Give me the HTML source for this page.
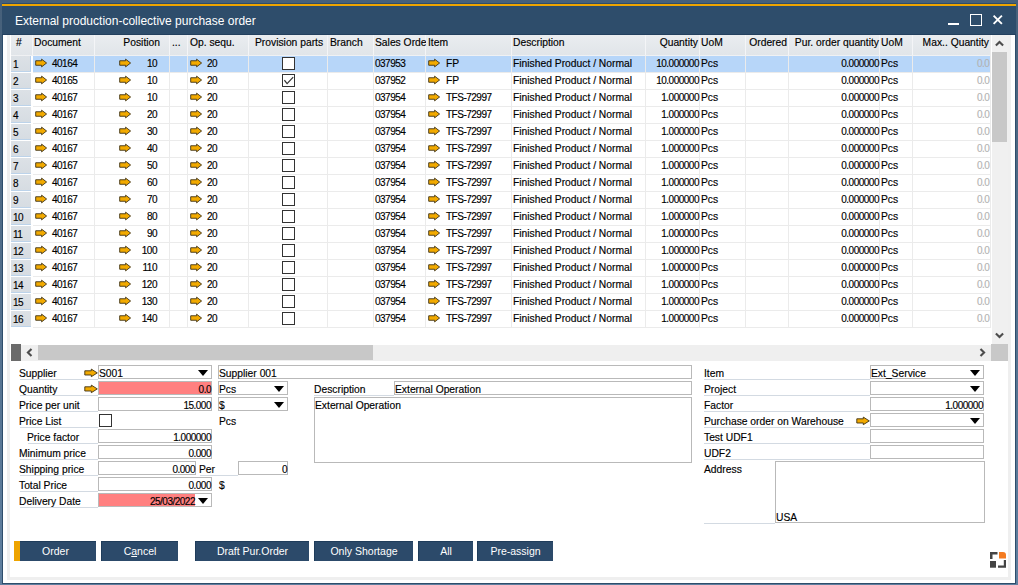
<!DOCTYPE html><html><head><meta charset="utf-8"><style>
*{margin:0;padding:0;box-sizing:border-box}
html,body{width:1018px;height:585px;overflow:hidden}
body{position:relative;background:linear-gradient(#46607a,#5f7f9f);font-family:"Liberation Sans",sans-serif;font-size:10px;color:#000}
.b{position:absolute}
.t{position:absolute;white-space:nowrap;line-height:12px;font-size:10.3px;-webkit-text-stroke:0.15px currentColor}
.r{text-align:right}
.ar{position:absolute}
.n{letter-spacing:-0.5px;font-size:10px}
.cb{position:absolute;width:13px;height:13px;border:1px solid #333;background:#fff}
.fld{position:absolute;height:14px;border:1px solid #b9b9b9;background:#fff}
.lbl{position:absolute;border-bottom:1px solid #d3dae2;height:15px}
.dd{position:absolute;width:0;height:0;border-left:5px solid transparent;border-right:5px solid transparent;border-top:6px solid #000}
.btn{position:absolute;top:541px;height:20px;background:#2c4a6a;color:#fff;font-size:10.5px;line-height:18px;text-align:center;border-top:1px solid #1f3c5a;border-left:1px solid #1f3c5a}
</style></head><body><div class="b" style="left:2px;top:3px;width:1014px;height:581px;background:#2e4d6b"></div>
<div class="b" style="left:2px;top:4px;width:1014px;height:2px;background:#eea400"></div>
<div class="t " style="left:15px;top:14px;color:#fff;font-size:12px;line-height:14px;-webkit-text-stroke:0">External production-collective purchase order</div>
<div class="b" style="left:948px;top:23px;width:11px;height:2px;background:#fff"></div>
<div class="b" style="left:970px;top:14px;width:11.5px;height:11.5px;border:1.6px solid #fff"></div>
<svg class="ar" style="left:992px;top:14px" width="12" height="12" viewBox="0 0 12 12"><path d="M1.6 1.6L9.9 9.9M9.9 1.6L1.6 9.9" stroke="#fff" stroke-width="1.9"/></svg>
<div class="b" style="left:3px;top:35px;width:1012px;height:548px;background:#fff"></div>
<div class="b" style="left:2px;top:34px;width:1014px;height:1px;background:#23405e"></div>
<div class="b" style="left:7px;top:35px;width:3px;height:545px;background:#efefef"></div>
<div class="b" style="left:1008px;top:35px;width:3px;height:545px;background:#efefef"></div>
<div class="b" style="left:7px;top:577px;width:1004px;height:3px;background:#efefef"></div>
<div class="b" style="left:11px;top:35px;width:980px;height:20px;background:linear-gradient(#eaedf0,#e1e5e9)"></div>
<div class="b" style="left:32px;top:35px;width:1px;height:20px;background:#f4f5f7"></div>
<div class="b" style="left:94px;top:35px;width:1px;height:20px;background:#f4f5f7"></div>
<div class="b" style="left:169px;top:35px;width:1px;height:20px;background:#f4f5f7"></div>
<div class="b" style="left:187px;top:35px;width:1px;height:20px;background:#f4f5f7"></div>
<div class="b" style="left:248px;top:35px;width:1px;height:20px;background:#f4f5f7"></div>
<div class="b" style="left:327px;top:35px;width:1px;height:20px;background:#f4f5f7"></div>
<div class="b" style="left:373px;top:35px;width:1px;height:20px;background:#f4f5f7"></div>
<div class="b" style="left:425px;top:35px;width:1px;height:20px;background:#f4f5f7"></div>
<div class="b" style="left:511px;top:35px;width:1px;height:20px;background:#f4f5f7"></div>
<div class="b" style="left:645px;top:35px;width:1px;height:20px;background:#f4f5f7"></div>
<div class="b" style="left:699px;top:35px;width:1px;height:20px;background:#f4f5f7"></div>
<div class="b" style="left:745px;top:35px;width:1px;height:20px;background:#f4f5f7"></div>
<div class="b" style="left:788px;top:35px;width:1px;height:20px;background:#f4f5f7"></div>
<div class="b" style="left:879px;top:35px;width:1px;height:20px;background:#f4f5f7"></div>
<div class="b" style="left:912px;top:35px;width:1px;height:20px;background:#f4f5f7"></div>
<div class="b" style="left:11px;top:55px;width:980px;height:1px;background:#f0f1f3"></div>
<div class="t " style="left:16px;top:37px;">#</div>
<div class="t " style="left:34px;top:37px;">Document</div>
<div class="t r " style="right:858px;top:37px;">Position</div>
<div class="t " style="left:172px;top:37px;">...</div>
<div class="t " style="left:190px;top:37px;">Op. sequ.</div>
<div class="t " style="left:255px;top:37px;">Provision parts</div>
<div class="t " style="left:330px;top:37px;">Branch</div>
<div class="t" style="left:375px;top:37px;width:51px;overflow:hidden;color:#000">Sales Order</div>
<div class="t " style="left:428px;top:37px;">Item</div>
<div class="t " style="left:513px;top:37px;">Description</div>
<div class="t r " style="right:320px;top:37px;">Quantity</div>
<div class="t " style="left:701px;top:37px;">UoM</div>
<div class="t r " style="right:231px;top:37px;">Ordered</div>
<div class="t r " style="right:139px;top:37px;">Pur. order quantity</div>
<div class="t " style="left:881px;top:37px;">UoM</div>
<div class="t r " style="right:29px;top:37px;">Max.. Quantity</div>
<div class="b" style="left:11px;top:56px;width:20px;height:16px;background:linear-gradient(#dce1e6,#d6dce2);border-right:1px solid #b5d0ee"></div>
<div class="b" style="left:11px;top:71px;width:20px;height:1px;background:#bcd3ea"></div>
<div class="b" style="left:33px;top:56px;width:958px;height:16px;background:#b7d6f9"></div>
<div class="b" style="left:33px;top:72px;width:958px;height:1px;background:#ebebeb"></div>
<div class="b" style="left:94px;top:56px;width:1px;height:17px;background:#ebebeb"></div>
<div class="b" style="left:169px;top:56px;width:1px;height:17px;background:#ebebeb"></div>
<div class="b" style="left:187px;top:56px;width:1px;height:17px;background:#ebebeb"></div>
<div class="b" style="left:248px;top:56px;width:1px;height:17px;background:#ebebeb"></div>
<div class="b" style="left:327px;top:56px;width:1px;height:17px;background:#ebebeb"></div>
<div class="b" style="left:373px;top:56px;width:1px;height:17px;background:#ebebeb"></div>
<div class="b" style="left:425px;top:56px;width:1px;height:17px;background:#ebebeb"></div>
<div class="b" style="left:511px;top:56px;width:1px;height:17px;background:#ebebeb"></div>
<div class="b" style="left:645px;top:56px;width:1px;height:17px;background:#ebebeb"></div>
<div class="b" style="left:699px;top:56px;width:1px;height:17px;background:#ebebeb"></div>
<div class="b" style="left:745px;top:56px;width:1px;height:17px;background:#ebebeb"></div>
<div class="b" style="left:788px;top:56px;width:1px;height:17px;background:#ebebeb"></div>
<div class="b" style="left:879px;top:56px;width:1px;height:17px;background:#ebebeb"></div>
<div class="b" style="left:912px;top:56px;width:1px;height:17px;background:#ebebeb"></div>
<div class="t n" style="left:13px;top:59px;">1</div>
<svg class="ar" style="left:35px;top:58px" width="14" height="10" viewBox="0 0 14 10"><path d="M0.7 2.75H6.6V1.15L11.6 5L6.6 8.85V7.25H0.7Z" fill="#f2aa00" stroke="#3e3214" stroke-width="0.9" stroke-linejoin="miter"/></svg>
<div class="t n" style="left:52px;top:58px;">40164</div>
<svg class="ar" style="left:119px;top:58px" width="14" height="10" viewBox="0 0 14 10"><path d="M0.7 2.75H6.6V1.15L11.6 5L6.6 8.85V7.25H0.7Z" fill="#f2aa00" stroke="#3e3214" stroke-width="0.9" stroke-linejoin="miter"/></svg>
<div class="t r n" style="right:861px;top:58px;">10</div>
<svg class="ar" style="left:190px;top:58px" width="14" height="10" viewBox="0 0 14 10"><path d="M0.7 2.75H6.6V1.15L11.6 5L6.6 8.85V7.25H0.7Z" fill="#f2aa00" stroke="#3e3214" stroke-width="0.9" stroke-linejoin="miter"/></svg>
<div class="t n" style="left:207px;top:58px;">20</div>
<div class="cb" style="left:282px;top:57px"></div>
<div class="t n" style="left:375px;top:58px;">037953</div>
<svg class="ar" style="left:428px;top:58px" width="14" height="10" viewBox="0 0 14 10"><path d="M0.7 2.75H6.6V1.15L11.6 5L6.6 8.85V7.25H0.7Z" fill="#f2aa00" stroke="#3e3214" stroke-width="0.9" stroke-linejoin="miter"/></svg>
<div class="t " style="left:446px;top:58px;">FP</div>
<div class="t " style="left:513px;top:58px;">Finished Product / Normal</div>
<div class="t r n" style="right:319px;top:58px;">10.000000</div>
<div class="t " style="left:701px;top:58px;">Pcs</div>
<div class="t r n" style="right:139px;top:58px;">0.000000</div>
<div class="t " style="left:881px;top:58px;">Pcs</div>
<div class="t n" style="left:977px;top:58px;color:#b3b3b3">0.0</div>
<div class="b" style="left:11px;top:73px;width:20px;height:16px;background:linear-gradient(#dce1e6,#d6dce2)"></div>
<div class="b" style="left:11px;top:88px;width:20px;height:1px;background:#bcd3ea"></div>
<div class="b" style="left:33px;top:73px;width:958px;height:16px;background:#fff"></div>
<div class="b" style="left:33px;top:89px;width:958px;height:1px;background:#ebebeb"></div>
<div class="b" style="left:94px;top:73px;width:1px;height:17px;background:#ebebeb"></div>
<div class="b" style="left:169px;top:73px;width:1px;height:17px;background:#ebebeb"></div>
<div class="b" style="left:187px;top:73px;width:1px;height:17px;background:#ebebeb"></div>
<div class="b" style="left:248px;top:73px;width:1px;height:17px;background:#ebebeb"></div>
<div class="b" style="left:327px;top:73px;width:1px;height:17px;background:#ebebeb"></div>
<div class="b" style="left:373px;top:73px;width:1px;height:17px;background:#ebebeb"></div>
<div class="b" style="left:425px;top:73px;width:1px;height:17px;background:#ebebeb"></div>
<div class="b" style="left:511px;top:73px;width:1px;height:17px;background:#ebebeb"></div>
<div class="b" style="left:645px;top:73px;width:1px;height:17px;background:#ebebeb"></div>
<div class="b" style="left:699px;top:73px;width:1px;height:17px;background:#ebebeb"></div>
<div class="b" style="left:745px;top:73px;width:1px;height:17px;background:#ebebeb"></div>
<div class="b" style="left:788px;top:73px;width:1px;height:17px;background:#ebebeb"></div>
<div class="b" style="left:879px;top:73px;width:1px;height:17px;background:#ebebeb"></div>
<div class="b" style="left:912px;top:73px;width:1px;height:17px;background:#ebebeb"></div>
<div class="t n" style="left:13px;top:76px;">2</div>
<svg class="ar" style="left:35px;top:75px" width="14" height="10" viewBox="0 0 14 10"><path d="M0.7 2.75H6.6V1.15L11.6 5L6.6 8.85V7.25H0.7Z" fill="#f2aa00" stroke="#3e3214" stroke-width="0.9" stroke-linejoin="miter"/></svg>
<div class="t n" style="left:52px;top:75px;">40165</div>
<svg class="ar" style="left:119px;top:75px" width="14" height="10" viewBox="0 0 14 10"><path d="M0.7 2.75H6.6V1.15L11.6 5L6.6 8.85V7.25H0.7Z" fill="#f2aa00" stroke="#3e3214" stroke-width="0.9" stroke-linejoin="miter"/></svg>
<div class="t r n" style="right:861px;top:75px;">10</div>
<svg class="ar" style="left:190px;top:75px" width="14" height="10" viewBox="0 0 14 10"><path d="M0.7 2.75H6.6V1.15L11.6 5L6.6 8.85V7.25H0.7Z" fill="#f2aa00" stroke="#3e3214" stroke-width="0.9" stroke-linejoin="miter"/></svg>
<div class="t n" style="left:207px;top:75px;">20</div>
<div class="cb" style="left:282px;top:74px"></div>
<svg class="ar" style="left:284px;top:76px" width="10" height="10" viewBox="0 0 10 10"><path d="M0.4 4.2L3.1 7.6L9.2 1.2" fill="none" stroke="#333" stroke-width="1.2"/></svg>
<div class="t n" style="left:375px;top:75px;">037952</div>
<svg class="ar" style="left:428px;top:75px" width="14" height="10" viewBox="0 0 14 10"><path d="M0.7 2.75H6.6V1.15L11.6 5L6.6 8.85V7.25H0.7Z" fill="#f2aa00" stroke="#3e3214" stroke-width="0.9" stroke-linejoin="miter"/></svg>
<div class="t " style="left:446px;top:75px;">FP</div>
<div class="t " style="left:513px;top:75px;">Finished Product / Normal</div>
<div class="t r n" style="right:319px;top:75px;">10.000000</div>
<div class="t " style="left:701px;top:75px;">Pcs</div>
<div class="t r n" style="right:139px;top:75px;">0.000000</div>
<div class="t " style="left:881px;top:75px;">Pcs</div>
<div class="t n" style="left:977px;top:75px;color:#b3b3b3">0.0</div>
<div class="b" style="left:11px;top:90px;width:20px;height:16px;background:linear-gradient(#dce1e6,#d6dce2)"></div>
<div class="b" style="left:11px;top:105px;width:20px;height:1px;background:#bcd3ea"></div>
<div class="b" style="left:33px;top:90px;width:958px;height:16px;background:#fff"></div>
<div class="b" style="left:33px;top:106px;width:958px;height:1px;background:#ebebeb"></div>
<div class="b" style="left:94px;top:90px;width:1px;height:17px;background:#ebebeb"></div>
<div class="b" style="left:169px;top:90px;width:1px;height:17px;background:#ebebeb"></div>
<div class="b" style="left:187px;top:90px;width:1px;height:17px;background:#ebebeb"></div>
<div class="b" style="left:248px;top:90px;width:1px;height:17px;background:#ebebeb"></div>
<div class="b" style="left:327px;top:90px;width:1px;height:17px;background:#ebebeb"></div>
<div class="b" style="left:373px;top:90px;width:1px;height:17px;background:#ebebeb"></div>
<div class="b" style="left:425px;top:90px;width:1px;height:17px;background:#ebebeb"></div>
<div class="b" style="left:511px;top:90px;width:1px;height:17px;background:#ebebeb"></div>
<div class="b" style="left:645px;top:90px;width:1px;height:17px;background:#ebebeb"></div>
<div class="b" style="left:699px;top:90px;width:1px;height:17px;background:#ebebeb"></div>
<div class="b" style="left:745px;top:90px;width:1px;height:17px;background:#ebebeb"></div>
<div class="b" style="left:788px;top:90px;width:1px;height:17px;background:#ebebeb"></div>
<div class="b" style="left:879px;top:90px;width:1px;height:17px;background:#ebebeb"></div>
<div class="b" style="left:912px;top:90px;width:1px;height:17px;background:#ebebeb"></div>
<div class="t n" style="left:13px;top:93px;">3</div>
<svg class="ar" style="left:35px;top:92px" width="14" height="10" viewBox="0 0 14 10"><path d="M0.7 2.75H6.6V1.15L11.6 5L6.6 8.85V7.25H0.7Z" fill="#f2aa00" stroke="#3e3214" stroke-width="0.9" stroke-linejoin="miter"/></svg>
<div class="t n" style="left:52px;top:92px;">40167</div>
<svg class="ar" style="left:119px;top:92px" width="14" height="10" viewBox="0 0 14 10"><path d="M0.7 2.75H6.6V1.15L11.6 5L6.6 8.85V7.25H0.7Z" fill="#f2aa00" stroke="#3e3214" stroke-width="0.9" stroke-linejoin="miter"/></svg>
<div class="t r n" style="right:861px;top:92px;">10</div>
<svg class="ar" style="left:190px;top:92px" width="14" height="10" viewBox="0 0 14 10"><path d="M0.7 2.75H6.6V1.15L11.6 5L6.6 8.85V7.25H0.7Z" fill="#f2aa00" stroke="#3e3214" stroke-width="0.9" stroke-linejoin="miter"/></svg>
<div class="t n" style="left:207px;top:92px;">20</div>
<div class="cb" style="left:282px;top:91px"></div>
<div class="t n" style="left:375px;top:92px;">037954</div>
<svg class="ar" style="left:428px;top:92px" width="14" height="10" viewBox="0 0 14 10"><path d="M0.7 2.75H6.6V1.15L11.6 5L6.6 8.85V7.25H0.7Z" fill="#f2aa00" stroke="#3e3214" stroke-width="0.9" stroke-linejoin="miter"/></svg>
<div class="t n" style="left:446px;top:92px;">TFS-72997</div>
<div class="t " style="left:513px;top:92px;">Finished Product / Normal</div>
<div class="t r n" style="right:319px;top:92px;">1.000000</div>
<div class="t " style="left:701px;top:92px;">Pcs</div>
<div class="t r n" style="right:139px;top:92px;">0.000000</div>
<div class="t " style="left:881px;top:92px;">Pcs</div>
<div class="t n" style="left:977px;top:92px;color:#b3b3b3">0.0</div>
<div class="b" style="left:11px;top:107px;width:20px;height:16px;background:linear-gradient(#dce1e6,#d6dce2)"></div>
<div class="b" style="left:11px;top:122px;width:20px;height:1px;background:#bcd3ea"></div>
<div class="b" style="left:33px;top:107px;width:958px;height:16px;background:#fff"></div>
<div class="b" style="left:33px;top:123px;width:958px;height:1px;background:#ebebeb"></div>
<div class="b" style="left:94px;top:107px;width:1px;height:17px;background:#ebebeb"></div>
<div class="b" style="left:169px;top:107px;width:1px;height:17px;background:#ebebeb"></div>
<div class="b" style="left:187px;top:107px;width:1px;height:17px;background:#ebebeb"></div>
<div class="b" style="left:248px;top:107px;width:1px;height:17px;background:#ebebeb"></div>
<div class="b" style="left:327px;top:107px;width:1px;height:17px;background:#ebebeb"></div>
<div class="b" style="left:373px;top:107px;width:1px;height:17px;background:#ebebeb"></div>
<div class="b" style="left:425px;top:107px;width:1px;height:17px;background:#ebebeb"></div>
<div class="b" style="left:511px;top:107px;width:1px;height:17px;background:#ebebeb"></div>
<div class="b" style="left:645px;top:107px;width:1px;height:17px;background:#ebebeb"></div>
<div class="b" style="left:699px;top:107px;width:1px;height:17px;background:#ebebeb"></div>
<div class="b" style="left:745px;top:107px;width:1px;height:17px;background:#ebebeb"></div>
<div class="b" style="left:788px;top:107px;width:1px;height:17px;background:#ebebeb"></div>
<div class="b" style="left:879px;top:107px;width:1px;height:17px;background:#ebebeb"></div>
<div class="b" style="left:912px;top:107px;width:1px;height:17px;background:#ebebeb"></div>
<div class="t n" style="left:13px;top:110px;">4</div>
<svg class="ar" style="left:35px;top:109px" width="14" height="10" viewBox="0 0 14 10"><path d="M0.7 2.75H6.6V1.15L11.6 5L6.6 8.85V7.25H0.7Z" fill="#f2aa00" stroke="#3e3214" stroke-width="0.9" stroke-linejoin="miter"/></svg>
<div class="t n" style="left:52px;top:109px;">40167</div>
<svg class="ar" style="left:119px;top:109px" width="14" height="10" viewBox="0 0 14 10"><path d="M0.7 2.75H6.6V1.15L11.6 5L6.6 8.85V7.25H0.7Z" fill="#f2aa00" stroke="#3e3214" stroke-width="0.9" stroke-linejoin="miter"/></svg>
<div class="t r n" style="right:861px;top:109px;">20</div>
<svg class="ar" style="left:190px;top:109px" width="14" height="10" viewBox="0 0 14 10"><path d="M0.7 2.75H6.6V1.15L11.6 5L6.6 8.85V7.25H0.7Z" fill="#f2aa00" stroke="#3e3214" stroke-width="0.9" stroke-linejoin="miter"/></svg>
<div class="t n" style="left:207px;top:109px;">20</div>
<div class="cb" style="left:282px;top:108px"></div>
<div class="t n" style="left:375px;top:109px;">037954</div>
<svg class="ar" style="left:428px;top:109px" width="14" height="10" viewBox="0 0 14 10"><path d="M0.7 2.75H6.6V1.15L11.6 5L6.6 8.85V7.25H0.7Z" fill="#f2aa00" stroke="#3e3214" stroke-width="0.9" stroke-linejoin="miter"/></svg>
<div class="t n" style="left:446px;top:109px;">TFS-72997</div>
<div class="t " style="left:513px;top:109px;">Finished Product / Normal</div>
<div class="t r n" style="right:319px;top:109px;">1.000000</div>
<div class="t " style="left:701px;top:109px;">Pcs</div>
<div class="t r n" style="right:139px;top:109px;">0.000000</div>
<div class="t " style="left:881px;top:109px;">Pcs</div>
<div class="t n" style="left:977px;top:109px;color:#b3b3b3">0.0</div>
<div class="b" style="left:11px;top:124px;width:20px;height:16px;background:linear-gradient(#dce1e6,#d6dce2)"></div>
<div class="b" style="left:11px;top:139px;width:20px;height:1px;background:#bcd3ea"></div>
<div class="b" style="left:33px;top:124px;width:958px;height:16px;background:#fff"></div>
<div class="b" style="left:33px;top:140px;width:958px;height:1px;background:#ebebeb"></div>
<div class="b" style="left:94px;top:124px;width:1px;height:17px;background:#ebebeb"></div>
<div class="b" style="left:169px;top:124px;width:1px;height:17px;background:#ebebeb"></div>
<div class="b" style="left:187px;top:124px;width:1px;height:17px;background:#ebebeb"></div>
<div class="b" style="left:248px;top:124px;width:1px;height:17px;background:#ebebeb"></div>
<div class="b" style="left:327px;top:124px;width:1px;height:17px;background:#ebebeb"></div>
<div class="b" style="left:373px;top:124px;width:1px;height:17px;background:#ebebeb"></div>
<div class="b" style="left:425px;top:124px;width:1px;height:17px;background:#ebebeb"></div>
<div class="b" style="left:511px;top:124px;width:1px;height:17px;background:#ebebeb"></div>
<div class="b" style="left:645px;top:124px;width:1px;height:17px;background:#ebebeb"></div>
<div class="b" style="left:699px;top:124px;width:1px;height:17px;background:#ebebeb"></div>
<div class="b" style="left:745px;top:124px;width:1px;height:17px;background:#ebebeb"></div>
<div class="b" style="left:788px;top:124px;width:1px;height:17px;background:#ebebeb"></div>
<div class="b" style="left:879px;top:124px;width:1px;height:17px;background:#ebebeb"></div>
<div class="b" style="left:912px;top:124px;width:1px;height:17px;background:#ebebeb"></div>
<div class="t n" style="left:13px;top:127px;">5</div>
<svg class="ar" style="left:35px;top:126px" width="14" height="10" viewBox="0 0 14 10"><path d="M0.7 2.75H6.6V1.15L11.6 5L6.6 8.85V7.25H0.7Z" fill="#f2aa00" stroke="#3e3214" stroke-width="0.9" stroke-linejoin="miter"/></svg>
<div class="t n" style="left:52px;top:126px;">40167</div>
<svg class="ar" style="left:119px;top:126px" width="14" height="10" viewBox="0 0 14 10"><path d="M0.7 2.75H6.6V1.15L11.6 5L6.6 8.85V7.25H0.7Z" fill="#f2aa00" stroke="#3e3214" stroke-width="0.9" stroke-linejoin="miter"/></svg>
<div class="t r n" style="right:861px;top:126px;">30</div>
<svg class="ar" style="left:190px;top:126px" width="14" height="10" viewBox="0 0 14 10"><path d="M0.7 2.75H6.6V1.15L11.6 5L6.6 8.85V7.25H0.7Z" fill="#f2aa00" stroke="#3e3214" stroke-width="0.9" stroke-linejoin="miter"/></svg>
<div class="t n" style="left:207px;top:126px;">20</div>
<div class="cb" style="left:282px;top:125px"></div>
<div class="t n" style="left:375px;top:126px;">037954</div>
<svg class="ar" style="left:428px;top:126px" width="14" height="10" viewBox="0 0 14 10"><path d="M0.7 2.75H6.6V1.15L11.6 5L6.6 8.85V7.25H0.7Z" fill="#f2aa00" stroke="#3e3214" stroke-width="0.9" stroke-linejoin="miter"/></svg>
<div class="t n" style="left:446px;top:126px;">TFS-72997</div>
<div class="t " style="left:513px;top:126px;">Finished Product / Normal</div>
<div class="t r n" style="right:319px;top:126px;">1.000000</div>
<div class="t " style="left:701px;top:126px;">Pcs</div>
<div class="t r n" style="right:139px;top:126px;">0.000000</div>
<div class="t " style="left:881px;top:126px;">Pcs</div>
<div class="t n" style="left:977px;top:126px;color:#b3b3b3">0.0</div>
<div class="b" style="left:11px;top:141px;width:20px;height:16px;background:linear-gradient(#dce1e6,#d6dce2)"></div>
<div class="b" style="left:11px;top:156px;width:20px;height:1px;background:#bcd3ea"></div>
<div class="b" style="left:33px;top:141px;width:958px;height:16px;background:#fff"></div>
<div class="b" style="left:33px;top:157px;width:958px;height:1px;background:#ebebeb"></div>
<div class="b" style="left:94px;top:141px;width:1px;height:17px;background:#ebebeb"></div>
<div class="b" style="left:169px;top:141px;width:1px;height:17px;background:#ebebeb"></div>
<div class="b" style="left:187px;top:141px;width:1px;height:17px;background:#ebebeb"></div>
<div class="b" style="left:248px;top:141px;width:1px;height:17px;background:#ebebeb"></div>
<div class="b" style="left:327px;top:141px;width:1px;height:17px;background:#ebebeb"></div>
<div class="b" style="left:373px;top:141px;width:1px;height:17px;background:#ebebeb"></div>
<div class="b" style="left:425px;top:141px;width:1px;height:17px;background:#ebebeb"></div>
<div class="b" style="left:511px;top:141px;width:1px;height:17px;background:#ebebeb"></div>
<div class="b" style="left:645px;top:141px;width:1px;height:17px;background:#ebebeb"></div>
<div class="b" style="left:699px;top:141px;width:1px;height:17px;background:#ebebeb"></div>
<div class="b" style="left:745px;top:141px;width:1px;height:17px;background:#ebebeb"></div>
<div class="b" style="left:788px;top:141px;width:1px;height:17px;background:#ebebeb"></div>
<div class="b" style="left:879px;top:141px;width:1px;height:17px;background:#ebebeb"></div>
<div class="b" style="left:912px;top:141px;width:1px;height:17px;background:#ebebeb"></div>
<div class="t n" style="left:13px;top:144px;">6</div>
<svg class="ar" style="left:35px;top:143px" width="14" height="10" viewBox="0 0 14 10"><path d="M0.7 2.75H6.6V1.15L11.6 5L6.6 8.85V7.25H0.7Z" fill="#f2aa00" stroke="#3e3214" stroke-width="0.9" stroke-linejoin="miter"/></svg>
<div class="t n" style="left:52px;top:143px;">40167</div>
<svg class="ar" style="left:119px;top:143px" width="14" height="10" viewBox="0 0 14 10"><path d="M0.7 2.75H6.6V1.15L11.6 5L6.6 8.85V7.25H0.7Z" fill="#f2aa00" stroke="#3e3214" stroke-width="0.9" stroke-linejoin="miter"/></svg>
<div class="t r n" style="right:861px;top:143px;">40</div>
<svg class="ar" style="left:190px;top:143px" width="14" height="10" viewBox="0 0 14 10"><path d="M0.7 2.75H6.6V1.15L11.6 5L6.6 8.85V7.25H0.7Z" fill="#f2aa00" stroke="#3e3214" stroke-width="0.9" stroke-linejoin="miter"/></svg>
<div class="t n" style="left:207px;top:143px;">20</div>
<div class="cb" style="left:282px;top:142px"></div>
<div class="t n" style="left:375px;top:143px;">037954</div>
<svg class="ar" style="left:428px;top:143px" width="14" height="10" viewBox="0 0 14 10"><path d="M0.7 2.75H6.6V1.15L11.6 5L6.6 8.85V7.25H0.7Z" fill="#f2aa00" stroke="#3e3214" stroke-width="0.9" stroke-linejoin="miter"/></svg>
<div class="t n" style="left:446px;top:143px;">TFS-72997</div>
<div class="t " style="left:513px;top:143px;">Finished Product / Normal</div>
<div class="t r n" style="right:319px;top:143px;">1.000000</div>
<div class="t " style="left:701px;top:143px;">Pcs</div>
<div class="t r n" style="right:139px;top:143px;">0.000000</div>
<div class="t " style="left:881px;top:143px;">Pcs</div>
<div class="t n" style="left:977px;top:143px;color:#b3b3b3">0.0</div>
<div class="b" style="left:11px;top:158px;width:20px;height:16px;background:linear-gradient(#dce1e6,#d6dce2)"></div>
<div class="b" style="left:11px;top:173px;width:20px;height:1px;background:#bcd3ea"></div>
<div class="b" style="left:33px;top:158px;width:958px;height:16px;background:#fff"></div>
<div class="b" style="left:33px;top:174px;width:958px;height:1px;background:#ebebeb"></div>
<div class="b" style="left:94px;top:158px;width:1px;height:17px;background:#ebebeb"></div>
<div class="b" style="left:169px;top:158px;width:1px;height:17px;background:#ebebeb"></div>
<div class="b" style="left:187px;top:158px;width:1px;height:17px;background:#ebebeb"></div>
<div class="b" style="left:248px;top:158px;width:1px;height:17px;background:#ebebeb"></div>
<div class="b" style="left:327px;top:158px;width:1px;height:17px;background:#ebebeb"></div>
<div class="b" style="left:373px;top:158px;width:1px;height:17px;background:#ebebeb"></div>
<div class="b" style="left:425px;top:158px;width:1px;height:17px;background:#ebebeb"></div>
<div class="b" style="left:511px;top:158px;width:1px;height:17px;background:#ebebeb"></div>
<div class="b" style="left:645px;top:158px;width:1px;height:17px;background:#ebebeb"></div>
<div class="b" style="left:699px;top:158px;width:1px;height:17px;background:#ebebeb"></div>
<div class="b" style="left:745px;top:158px;width:1px;height:17px;background:#ebebeb"></div>
<div class="b" style="left:788px;top:158px;width:1px;height:17px;background:#ebebeb"></div>
<div class="b" style="left:879px;top:158px;width:1px;height:17px;background:#ebebeb"></div>
<div class="b" style="left:912px;top:158px;width:1px;height:17px;background:#ebebeb"></div>
<div class="t n" style="left:13px;top:161px;">7</div>
<svg class="ar" style="left:35px;top:160px" width="14" height="10" viewBox="0 0 14 10"><path d="M0.7 2.75H6.6V1.15L11.6 5L6.6 8.85V7.25H0.7Z" fill="#f2aa00" stroke="#3e3214" stroke-width="0.9" stroke-linejoin="miter"/></svg>
<div class="t n" style="left:52px;top:160px;">40167</div>
<svg class="ar" style="left:119px;top:160px" width="14" height="10" viewBox="0 0 14 10"><path d="M0.7 2.75H6.6V1.15L11.6 5L6.6 8.85V7.25H0.7Z" fill="#f2aa00" stroke="#3e3214" stroke-width="0.9" stroke-linejoin="miter"/></svg>
<div class="t r n" style="right:861px;top:160px;">50</div>
<svg class="ar" style="left:190px;top:160px" width="14" height="10" viewBox="0 0 14 10"><path d="M0.7 2.75H6.6V1.15L11.6 5L6.6 8.85V7.25H0.7Z" fill="#f2aa00" stroke="#3e3214" stroke-width="0.9" stroke-linejoin="miter"/></svg>
<div class="t n" style="left:207px;top:160px;">20</div>
<div class="cb" style="left:282px;top:159px"></div>
<div class="t n" style="left:375px;top:160px;">037954</div>
<svg class="ar" style="left:428px;top:160px" width="14" height="10" viewBox="0 0 14 10"><path d="M0.7 2.75H6.6V1.15L11.6 5L6.6 8.85V7.25H0.7Z" fill="#f2aa00" stroke="#3e3214" stroke-width="0.9" stroke-linejoin="miter"/></svg>
<div class="t n" style="left:446px;top:160px;">TFS-72997</div>
<div class="t " style="left:513px;top:160px;">Finished Product / Normal</div>
<div class="t r n" style="right:319px;top:160px;">1.000000</div>
<div class="t " style="left:701px;top:160px;">Pcs</div>
<div class="t r n" style="right:139px;top:160px;">0.000000</div>
<div class="t " style="left:881px;top:160px;">Pcs</div>
<div class="t n" style="left:977px;top:160px;color:#b3b3b3">0.0</div>
<div class="b" style="left:11px;top:175px;width:20px;height:16px;background:linear-gradient(#dce1e6,#d6dce2)"></div>
<div class="b" style="left:11px;top:190px;width:20px;height:1px;background:#bcd3ea"></div>
<div class="b" style="left:33px;top:175px;width:958px;height:16px;background:#fff"></div>
<div class="b" style="left:33px;top:191px;width:958px;height:1px;background:#ebebeb"></div>
<div class="b" style="left:94px;top:175px;width:1px;height:17px;background:#ebebeb"></div>
<div class="b" style="left:169px;top:175px;width:1px;height:17px;background:#ebebeb"></div>
<div class="b" style="left:187px;top:175px;width:1px;height:17px;background:#ebebeb"></div>
<div class="b" style="left:248px;top:175px;width:1px;height:17px;background:#ebebeb"></div>
<div class="b" style="left:327px;top:175px;width:1px;height:17px;background:#ebebeb"></div>
<div class="b" style="left:373px;top:175px;width:1px;height:17px;background:#ebebeb"></div>
<div class="b" style="left:425px;top:175px;width:1px;height:17px;background:#ebebeb"></div>
<div class="b" style="left:511px;top:175px;width:1px;height:17px;background:#ebebeb"></div>
<div class="b" style="left:645px;top:175px;width:1px;height:17px;background:#ebebeb"></div>
<div class="b" style="left:699px;top:175px;width:1px;height:17px;background:#ebebeb"></div>
<div class="b" style="left:745px;top:175px;width:1px;height:17px;background:#ebebeb"></div>
<div class="b" style="left:788px;top:175px;width:1px;height:17px;background:#ebebeb"></div>
<div class="b" style="left:879px;top:175px;width:1px;height:17px;background:#ebebeb"></div>
<div class="b" style="left:912px;top:175px;width:1px;height:17px;background:#ebebeb"></div>
<div class="t n" style="left:13px;top:178px;">8</div>
<svg class="ar" style="left:35px;top:177px" width="14" height="10" viewBox="0 0 14 10"><path d="M0.7 2.75H6.6V1.15L11.6 5L6.6 8.85V7.25H0.7Z" fill="#f2aa00" stroke="#3e3214" stroke-width="0.9" stroke-linejoin="miter"/></svg>
<div class="t n" style="left:52px;top:177px;">40167</div>
<svg class="ar" style="left:119px;top:177px" width="14" height="10" viewBox="0 0 14 10"><path d="M0.7 2.75H6.6V1.15L11.6 5L6.6 8.85V7.25H0.7Z" fill="#f2aa00" stroke="#3e3214" stroke-width="0.9" stroke-linejoin="miter"/></svg>
<div class="t r n" style="right:861px;top:177px;">60</div>
<svg class="ar" style="left:190px;top:177px" width="14" height="10" viewBox="0 0 14 10"><path d="M0.7 2.75H6.6V1.15L11.6 5L6.6 8.85V7.25H0.7Z" fill="#f2aa00" stroke="#3e3214" stroke-width="0.9" stroke-linejoin="miter"/></svg>
<div class="t n" style="left:207px;top:177px;">20</div>
<div class="cb" style="left:282px;top:176px"></div>
<div class="t n" style="left:375px;top:177px;">037954</div>
<svg class="ar" style="left:428px;top:177px" width="14" height="10" viewBox="0 0 14 10"><path d="M0.7 2.75H6.6V1.15L11.6 5L6.6 8.85V7.25H0.7Z" fill="#f2aa00" stroke="#3e3214" stroke-width="0.9" stroke-linejoin="miter"/></svg>
<div class="t n" style="left:446px;top:177px;">TFS-72997</div>
<div class="t " style="left:513px;top:177px;">Finished Product / Normal</div>
<div class="t r n" style="right:319px;top:177px;">1.000000</div>
<div class="t " style="left:701px;top:177px;">Pcs</div>
<div class="t r n" style="right:139px;top:177px;">0.000000</div>
<div class="t " style="left:881px;top:177px;">Pcs</div>
<div class="t n" style="left:977px;top:177px;color:#b3b3b3">0.0</div>
<div class="b" style="left:11px;top:192px;width:20px;height:16px;background:linear-gradient(#dce1e6,#d6dce2)"></div>
<div class="b" style="left:11px;top:207px;width:20px;height:1px;background:#bcd3ea"></div>
<div class="b" style="left:33px;top:192px;width:958px;height:16px;background:#fff"></div>
<div class="b" style="left:33px;top:208px;width:958px;height:1px;background:#ebebeb"></div>
<div class="b" style="left:94px;top:192px;width:1px;height:17px;background:#ebebeb"></div>
<div class="b" style="left:169px;top:192px;width:1px;height:17px;background:#ebebeb"></div>
<div class="b" style="left:187px;top:192px;width:1px;height:17px;background:#ebebeb"></div>
<div class="b" style="left:248px;top:192px;width:1px;height:17px;background:#ebebeb"></div>
<div class="b" style="left:327px;top:192px;width:1px;height:17px;background:#ebebeb"></div>
<div class="b" style="left:373px;top:192px;width:1px;height:17px;background:#ebebeb"></div>
<div class="b" style="left:425px;top:192px;width:1px;height:17px;background:#ebebeb"></div>
<div class="b" style="left:511px;top:192px;width:1px;height:17px;background:#ebebeb"></div>
<div class="b" style="left:645px;top:192px;width:1px;height:17px;background:#ebebeb"></div>
<div class="b" style="left:699px;top:192px;width:1px;height:17px;background:#ebebeb"></div>
<div class="b" style="left:745px;top:192px;width:1px;height:17px;background:#ebebeb"></div>
<div class="b" style="left:788px;top:192px;width:1px;height:17px;background:#ebebeb"></div>
<div class="b" style="left:879px;top:192px;width:1px;height:17px;background:#ebebeb"></div>
<div class="b" style="left:912px;top:192px;width:1px;height:17px;background:#ebebeb"></div>
<div class="t n" style="left:13px;top:195px;">9</div>
<svg class="ar" style="left:35px;top:194px" width="14" height="10" viewBox="0 0 14 10"><path d="M0.7 2.75H6.6V1.15L11.6 5L6.6 8.85V7.25H0.7Z" fill="#f2aa00" stroke="#3e3214" stroke-width="0.9" stroke-linejoin="miter"/></svg>
<div class="t n" style="left:52px;top:194px;">40167</div>
<svg class="ar" style="left:119px;top:194px" width="14" height="10" viewBox="0 0 14 10"><path d="M0.7 2.75H6.6V1.15L11.6 5L6.6 8.85V7.25H0.7Z" fill="#f2aa00" stroke="#3e3214" stroke-width="0.9" stroke-linejoin="miter"/></svg>
<div class="t r n" style="right:861px;top:194px;">70</div>
<svg class="ar" style="left:190px;top:194px" width="14" height="10" viewBox="0 0 14 10"><path d="M0.7 2.75H6.6V1.15L11.6 5L6.6 8.85V7.25H0.7Z" fill="#f2aa00" stroke="#3e3214" stroke-width="0.9" stroke-linejoin="miter"/></svg>
<div class="t n" style="left:207px;top:194px;">20</div>
<div class="cb" style="left:282px;top:193px"></div>
<div class="t n" style="left:375px;top:194px;">037954</div>
<svg class="ar" style="left:428px;top:194px" width="14" height="10" viewBox="0 0 14 10"><path d="M0.7 2.75H6.6V1.15L11.6 5L6.6 8.85V7.25H0.7Z" fill="#f2aa00" stroke="#3e3214" stroke-width="0.9" stroke-linejoin="miter"/></svg>
<div class="t n" style="left:446px;top:194px;">TFS-72997</div>
<div class="t " style="left:513px;top:194px;">Finished Product / Normal</div>
<div class="t r n" style="right:319px;top:194px;">1.000000</div>
<div class="t " style="left:701px;top:194px;">Pcs</div>
<div class="t r n" style="right:139px;top:194px;">0.000000</div>
<div class="t " style="left:881px;top:194px;">Pcs</div>
<div class="t n" style="left:977px;top:194px;color:#b3b3b3">0.0</div>
<div class="b" style="left:11px;top:209px;width:20px;height:16px;background:linear-gradient(#dce1e6,#d6dce2)"></div>
<div class="b" style="left:11px;top:224px;width:20px;height:1px;background:#bcd3ea"></div>
<div class="b" style="left:33px;top:209px;width:958px;height:16px;background:#fff"></div>
<div class="b" style="left:33px;top:225px;width:958px;height:1px;background:#ebebeb"></div>
<div class="b" style="left:94px;top:209px;width:1px;height:17px;background:#ebebeb"></div>
<div class="b" style="left:169px;top:209px;width:1px;height:17px;background:#ebebeb"></div>
<div class="b" style="left:187px;top:209px;width:1px;height:17px;background:#ebebeb"></div>
<div class="b" style="left:248px;top:209px;width:1px;height:17px;background:#ebebeb"></div>
<div class="b" style="left:327px;top:209px;width:1px;height:17px;background:#ebebeb"></div>
<div class="b" style="left:373px;top:209px;width:1px;height:17px;background:#ebebeb"></div>
<div class="b" style="left:425px;top:209px;width:1px;height:17px;background:#ebebeb"></div>
<div class="b" style="left:511px;top:209px;width:1px;height:17px;background:#ebebeb"></div>
<div class="b" style="left:645px;top:209px;width:1px;height:17px;background:#ebebeb"></div>
<div class="b" style="left:699px;top:209px;width:1px;height:17px;background:#ebebeb"></div>
<div class="b" style="left:745px;top:209px;width:1px;height:17px;background:#ebebeb"></div>
<div class="b" style="left:788px;top:209px;width:1px;height:17px;background:#ebebeb"></div>
<div class="b" style="left:879px;top:209px;width:1px;height:17px;background:#ebebeb"></div>
<div class="b" style="left:912px;top:209px;width:1px;height:17px;background:#ebebeb"></div>
<div class="t n" style="left:13px;top:212px;">10</div>
<svg class="ar" style="left:35px;top:211px" width="14" height="10" viewBox="0 0 14 10"><path d="M0.7 2.75H6.6V1.15L11.6 5L6.6 8.85V7.25H0.7Z" fill="#f2aa00" stroke="#3e3214" stroke-width="0.9" stroke-linejoin="miter"/></svg>
<div class="t n" style="left:52px;top:211px;">40167</div>
<svg class="ar" style="left:119px;top:211px" width="14" height="10" viewBox="0 0 14 10"><path d="M0.7 2.75H6.6V1.15L11.6 5L6.6 8.85V7.25H0.7Z" fill="#f2aa00" stroke="#3e3214" stroke-width="0.9" stroke-linejoin="miter"/></svg>
<div class="t r n" style="right:861px;top:211px;">80</div>
<svg class="ar" style="left:190px;top:211px" width="14" height="10" viewBox="0 0 14 10"><path d="M0.7 2.75H6.6V1.15L11.6 5L6.6 8.85V7.25H0.7Z" fill="#f2aa00" stroke="#3e3214" stroke-width="0.9" stroke-linejoin="miter"/></svg>
<div class="t n" style="left:207px;top:211px;">20</div>
<div class="cb" style="left:282px;top:210px"></div>
<div class="t n" style="left:375px;top:211px;">037954</div>
<svg class="ar" style="left:428px;top:211px" width="14" height="10" viewBox="0 0 14 10"><path d="M0.7 2.75H6.6V1.15L11.6 5L6.6 8.85V7.25H0.7Z" fill="#f2aa00" stroke="#3e3214" stroke-width="0.9" stroke-linejoin="miter"/></svg>
<div class="t n" style="left:446px;top:211px;">TFS-72997</div>
<div class="t " style="left:513px;top:211px;">Finished Product / Normal</div>
<div class="t r n" style="right:319px;top:211px;">1.000000</div>
<div class="t " style="left:701px;top:211px;">Pcs</div>
<div class="t r n" style="right:139px;top:211px;">0.000000</div>
<div class="t " style="left:881px;top:211px;">Pcs</div>
<div class="t n" style="left:977px;top:211px;color:#b3b3b3">0.0</div>
<div class="b" style="left:11px;top:226px;width:20px;height:16px;background:linear-gradient(#dce1e6,#d6dce2)"></div>
<div class="b" style="left:11px;top:241px;width:20px;height:1px;background:#bcd3ea"></div>
<div class="b" style="left:33px;top:226px;width:958px;height:16px;background:#fff"></div>
<div class="b" style="left:33px;top:242px;width:958px;height:1px;background:#ebebeb"></div>
<div class="b" style="left:94px;top:226px;width:1px;height:17px;background:#ebebeb"></div>
<div class="b" style="left:169px;top:226px;width:1px;height:17px;background:#ebebeb"></div>
<div class="b" style="left:187px;top:226px;width:1px;height:17px;background:#ebebeb"></div>
<div class="b" style="left:248px;top:226px;width:1px;height:17px;background:#ebebeb"></div>
<div class="b" style="left:327px;top:226px;width:1px;height:17px;background:#ebebeb"></div>
<div class="b" style="left:373px;top:226px;width:1px;height:17px;background:#ebebeb"></div>
<div class="b" style="left:425px;top:226px;width:1px;height:17px;background:#ebebeb"></div>
<div class="b" style="left:511px;top:226px;width:1px;height:17px;background:#ebebeb"></div>
<div class="b" style="left:645px;top:226px;width:1px;height:17px;background:#ebebeb"></div>
<div class="b" style="left:699px;top:226px;width:1px;height:17px;background:#ebebeb"></div>
<div class="b" style="left:745px;top:226px;width:1px;height:17px;background:#ebebeb"></div>
<div class="b" style="left:788px;top:226px;width:1px;height:17px;background:#ebebeb"></div>
<div class="b" style="left:879px;top:226px;width:1px;height:17px;background:#ebebeb"></div>
<div class="b" style="left:912px;top:226px;width:1px;height:17px;background:#ebebeb"></div>
<div class="t n" style="left:13px;top:229px;">11</div>
<svg class="ar" style="left:35px;top:228px" width="14" height="10" viewBox="0 0 14 10"><path d="M0.7 2.75H6.6V1.15L11.6 5L6.6 8.85V7.25H0.7Z" fill="#f2aa00" stroke="#3e3214" stroke-width="0.9" stroke-linejoin="miter"/></svg>
<div class="t n" style="left:52px;top:228px;">40167</div>
<svg class="ar" style="left:119px;top:228px" width="14" height="10" viewBox="0 0 14 10"><path d="M0.7 2.75H6.6V1.15L11.6 5L6.6 8.85V7.25H0.7Z" fill="#f2aa00" stroke="#3e3214" stroke-width="0.9" stroke-linejoin="miter"/></svg>
<div class="t r n" style="right:861px;top:228px;">90</div>
<svg class="ar" style="left:190px;top:228px" width="14" height="10" viewBox="0 0 14 10"><path d="M0.7 2.75H6.6V1.15L11.6 5L6.6 8.85V7.25H0.7Z" fill="#f2aa00" stroke="#3e3214" stroke-width="0.9" stroke-linejoin="miter"/></svg>
<div class="t n" style="left:207px;top:228px;">20</div>
<div class="cb" style="left:282px;top:227px"></div>
<div class="t n" style="left:375px;top:228px;">037954</div>
<svg class="ar" style="left:428px;top:228px" width="14" height="10" viewBox="0 0 14 10"><path d="M0.7 2.75H6.6V1.15L11.6 5L6.6 8.85V7.25H0.7Z" fill="#f2aa00" stroke="#3e3214" stroke-width="0.9" stroke-linejoin="miter"/></svg>
<div class="t n" style="left:446px;top:228px;">TFS-72997</div>
<div class="t " style="left:513px;top:228px;">Finished Product / Normal</div>
<div class="t r n" style="right:319px;top:228px;">1.000000</div>
<div class="t " style="left:701px;top:228px;">Pcs</div>
<div class="t r n" style="right:139px;top:228px;">0.000000</div>
<div class="t " style="left:881px;top:228px;">Pcs</div>
<div class="t n" style="left:977px;top:228px;color:#b3b3b3">0.0</div>
<div class="b" style="left:11px;top:243px;width:20px;height:16px;background:linear-gradient(#dce1e6,#d6dce2)"></div>
<div class="b" style="left:11px;top:258px;width:20px;height:1px;background:#bcd3ea"></div>
<div class="b" style="left:33px;top:243px;width:958px;height:16px;background:#fff"></div>
<div class="b" style="left:33px;top:259px;width:958px;height:1px;background:#ebebeb"></div>
<div class="b" style="left:94px;top:243px;width:1px;height:17px;background:#ebebeb"></div>
<div class="b" style="left:169px;top:243px;width:1px;height:17px;background:#ebebeb"></div>
<div class="b" style="left:187px;top:243px;width:1px;height:17px;background:#ebebeb"></div>
<div class="b" style="left:248px;top:243px;width:1px;height:17px;background:#ebebeb"></div>
<div class="b" style="left:327px;top:243px;width:1px;height:17px;background:#ebebeb"></div>
<div class="b" style="left:373px;top:243px;width:1px;height:17px;background:#ebebeb"></div>
<div class="b" style="left:425px;top:243px;width:1px;height:17px;background:#ebebeb"></div>
<div class="b" style="left:511px;top:243px;width:1px;height:17px;background:#ebebeb"></div>
<div class="b" style="left:645px;top:243px;width:1px;height:17px;background:#ebebeb"></div>
<div class="b" style="left:699px;top:243px;width:1px;height:17px;background:#ebebeb"></div>
<div class="b" style="left:745px;top:243px;width:1px;height:17px;background:#ebebeb"></div>
<div class="b" style="left:788px;top:243px;width:1px;height:17px;background:#ebebeb"></div>
<div class="b" style="left:879px;top:243px;width:1px;height:17px;background:#ebebeb"></div>
<div class="b" style="left:912px;top:243px;width:1px;height:17px;background:#ebebeb"></div>
<div class="t n" style="left:13px;top:246px;">12</div>
<svg class="ar" style="left:35px;top:245px" width="14" height="10" viewBox="0 0 14 10"><path d="M0.7 2.75H6.6V1.15L11.6 5L6.6 8.85V7.25H0.7Z" fill="#f2aa00" stroke="#3e3214" stroke-width="0.9" stroke-linejoin="miter"/></svg>
<div class="t n" style="left:52px;top:245px;">40167</div>
<svg class="ar" style="left:119px;top:245px" width="14" height="10" viewBox="0 0 14 10"><path d="M0.7 2.75H6.6V1.15L11.6 5L6.6 8.85V7.25H0.7Z" fill="#f2aa00" stroke="#3e3214" stroke-width="0.9" stroke-linejoin="miter"/></svg>
<div class="t r n" style="right:861px;top:245px;">100</div>
<svg class="ar" style="left:190px;top:245px" width="14" height="10" viewBox="0 0 14 10"><path d="M0.7 2.75H6.6V1.15L11.6 5L6.6 8.85V7.25H0.7Z" fill="#f2aa00" stroke="#3e3214" stroke-width="0.9" stroke-linejoin="miter"/></svg>
<div class="t n" style="left:207px;top:245px;">20</div>
<div class="cb" style="left:282px;top:244px"></div>
<div class="t n" style="left:375px;top:245px;">037954</div>
<svg class="ar" style="left:428px;top:245px" width="14" height="10" viewBox="0 0 14 10"><path d="M0.7 2.75H6.6V1.15L11.6 5L6.6 8.85V7.25H0.7Z" fill="#f2aa00" stroke="#3e3214" stroke-width="0.9" stroke-linejoin="miter"/></svg>
<div class="t n" style="left:446px;top:245px;">TFS-72997</div>
<div class="t " style="left:513px;top:245px;">Finished Product / Normal</div>
<div class="t r n" style="right:319px;top:245px;">1.000000</div>
<div class="t " style="left:701px;top:245px;">Pcs</div>
<div class="t r n" style="right:139px;top:245px;">0.000000</div>
<div class="t " style="left:881px;top:245px;">Pcs</div>
<div class="t n" style="left:977px;top:245px;color:#b3b3b3">0.0</div>
<div class="b" style="left:11px;top:260px;width:20px;height:16px;background:linear-gradient(#dce1e6,#d6dce2)"></div>
<div class="b" style="left:11px;top:275px;width:20px;height:1px;background:#bcd3ea"></div>
<div class="b" style="left:33px;top:260px;width:958px;height:16px;background:#fff"></div>
<div class="b" style="left:33px;top:276px;width:958px;height:1px;background:#ebebeb"></div>
<div class="b" style="left:94px;top:260px;width:1px;height:17px;background:#ebebeb"></div>
<div class="b" style="left:169px;top:260px;width:1px;height:17px;background:#ebebeb"></div>
<div class="b" style="left:187px;top:260px;width:1px;height:17px;background:#ebebeb"></div>
<div class="b" style="left:248px;top:260px;width:1px;height:17px;background:#ebebeb"></div>
<div class="b" style="left:327px;top:260px;width:1px;height:17px;background:#ebebeb"></div>
<div class="b" style="left:373px;top:260px;width:1px;height:17px;background:#ebebeb"></div>
<div class="b" style="left:425px;top:260px;width:1px;height:17px;background:#ebebeb"></div>
<div class="b" style="left:511px;top:260px;width:1px;height:17px;background:#ebebeb"></div>
<div class="b" style="left:645px;top:260px;width:1px;height:17px;background:#ebebeb"></div>
<div class="b" style="left:699px;top:260px;width:1px;height:17px;background:#ebebeb"></div>
<div class="b" style="left:745px;top:260px;width:1px;height:17px;background:#ebebeb"></div>
<div class="b" style="left:788px;top:260px;width:1px;height:17px;background:#ebebeb"></div>
<div class="b" style="left:879px;top:260px;width:1px;height:17px;background:#ebebeb"></div>
<div class="b" style="left:912px;top:260px;width:1px;height:17px;background:#ebebeb"></div>
<div class="t n" style="left:13px;top:263px;">13</div>
<svg class="ar" style="left:35px;top:262px" width="14" height="10" viewBox="0 0 14 10"><path d="M0.7 2.75H6.6V1.15L11.6 5L6.6 8.85V7.25H0.7Z" fill="#f2aa00" stroke="#3e3214" stroke-width="0.9" stroke-linejoin="miter"/></svg>
<div class="t n" style="left:52px;top:262px;">40167</div>
<svg class="ar" style="left:119px;top:262px" width="14" height="10" viewBox="0 0 14 10"><path d="M0.7 2.75H6.6V1.15L11.6 5L6.6 8.85V7.25H0.7Z" fill="#f2aa00" stroke="#3e3214" stroke-width="0.9" stroke-linejoin="miter"/></svg>
<div class="t r n" style="right:861px;top:262px;">110</div>
<svg class="ar" style="left:190px;top:262px" width="14" height="10" viewBox="0 0 14 10"><path d="M0.7 2.75H6.6V1.15L11.6 5L6.6 8.85V7.25H0.7Z" fill="#f2aa00" stroke="#3e3214" stroke-width="0.9" stroke-linejoin="miter"/></svg>
<div class="t n" style="left:207px;top:262px;">20</div>
<div class="cb" style="left:282px;top:261px"></div>
<div class="t n" style="left:375px;top:262px;">037954</div>
<svg class="ar" style="left:428px;top:262px" width="14" height="10" viewBox="0 0 14 10"><path d="M0.7 2.75H6.6V1.15L11.6 5L6.6 8.85V7.25H0.7Z" fill="#f2aa00" stroke="#3e3214" stroke-width="0.9" stroke-linejoin="miter"/></svg>
<div class="t n" style="left:446px;top:262px;">TFS-72997</div>
<div class="t " style="left:513px;top:262px;">Finished Product / Normal</div>
<div class="t r n" style="right:319px;top:262px;">1.000000</div>
<div class="t " style="left:701px;top:262px;">Pcs</div>
<div class="t r n" style="right:139px;top:262px;">0.000000</div>
<div class="t " style="left:881px;top:262px;">Pcs</div>
<div class="t n" style="left:977px;top:262px;color:#b3b3b3">0.0</div>
<div class="b" style="left:11px;top:277px;width:20px;height:16px;background:linear-gradient(#dce1e6,#d6dce2)"></div>
<div class="b" style="left:11px;top:292px;width:20px;height:1px;background:#bcd3ea"></div>
<div class="b" style="left:33px;top:277px;width:958px;height:16px;background:#fff"></div>
<div class="b" style="left:33px;top:293px;width:958px;height:1px;background:#ebebeb"></div>
<div class="b" style="left:94px;top:277px;width:1px;height:17px;background:#ebebeb"></div>
<div class="b" style="left:169px;top:277px;width:1px;height:17px;background:#ebebeb"></div>
<div class="b" style="left:187px;top:277px;width:1px;height:17px;background:#ebebeb"></div>
<div class="b" style="left:248px;top:277px;width:1px;height:17px;background:#ebebeb"></div>
<div class="b" style="left:327px;top:277px;width:1px;height:17px;background:#ebebeb"></div>
<div class="b" style="left:373px;top:277px;width:1px;height:17px;background:#ebebeb"></div>
<div class="b" style="left:425px;top:277px;width:1px;height:17px;background:#ebebeb"></div>
<div class="b" style="left:511px;top:277px;width:1px;height:17px;background:#ebebeb"></div>
<div class="b" style="left:645px;top:277px;width:1px;height:17px;background:#ebebeb"></div>
<div class="b" style="left:699px;top:277px;width:1px;height:17px;background:#ebebeb"></div>
<div class="b" style="left:745px;top:277px;width:1px;height:17px;background:#ebebeb"></div>
<div class="b" style="left:788px;top:277px;width:1px;height:17px;background:#ebebeb"></div>
<div class="b" style="left:879px;top:277px;width:1px;height:17px;background:#ebebeb"></div>
<div class="b" style="left:912px;top:277px;width:1px;height:17px;background:#ebebeb"></div>
<div class="t n" style="left:13px;top:280px;">14</div>
<svg class="ar" style="left:35px;top:279px" width="14" height="10" viewBox="0 0 14 10"><path d="M0.7 2.75H6.6V1.15L11.6 5L6.6 8.85V7.25H0.7Z" fill="#f2aa00" stroke="#3e3214" stroke-width="0.9" stroke-linejoin="miter"/></svg>
<div class="t n" style="left:52px;top:279px;">40167</div>
<svg class="ar" style="left:119px;top:279px" width="14" height="10" viewBox="0 0 14 10"><path d="M0.7 2.75H6.6V1.15L11.6 5L6.6 8.85V7.25H0.7Z" fill="#f2aa00" stroke="#3e3214" stroke-width="0.9" stroke-linejoin="miter"/></svg>
<div class="t r n" style="right:861px;top:279px;">120</div>
<svg class="ar" style="left:190px;top:279px" width="14" height="10" viewBox="0 0 14 10"><path d="M0.7 2.75H6.6V1.15L11.6 5L6.6 8.85V7.25H0.7Z" fill="#f2aa00" stroke="#3e3214" stroke-width="0.9" stroke-linejoin="miter"/></svg>
<div class="t n" style="left:207px;top:279px;">20</div>
<div class="cb" style="left:282px;top:278px"></div>
<div class="t n" style="left:375px;top:279px;">037954</div>
<svg class="ar" style="left:428px;top:279px" width="14" height="10" viewBox="0 0 14 10"><path d="M0.7 2.75H6.6V1.15L11.6 5L6.6 8.85V7.25H0.7Z" fill="#f2aa00" stroke="#3e3214" stroke-width="0.9" stroke-linejoin="miter"/></svg>
<div class="t n" style="left:446px;top:279px;">TFS-72997</div>
<div class="t " style="left:513px;top:279px;">Finished Product / Normal</div>
<div class="t r n" style="right:319px;top:279px;">1.000000</div>
<div class="t " style="left:701px;top:279px;">Pcs</div>
<div class="t r n" style="right:139px;top:279px;">0.000000</div>
<div class="t " style="left:881px;top:279px;">Pcs</div>
<div class="t n" style="left:977px;top:279px;color:#b3b3b3">0.0</div>
<div class="b" style="left:11px;top:294px;width:20px;height:16px;background:linear-gradient(#dce1e6,#d6dce2)"></div>
<div class="b" style="left:11px;top:309px;width:20px;height:1px;background:#bcd3ea"></div>
<div class="b" style="left:33px;top:294px;width:958px;height:16px;background:#fff"></div>
<div class="b" style="left:33px;top:310px;width:958px;height:1px;background:#ebebeb"></div>
<div class="b" style="left:94px;top:294px;width:1px;height:17px;background:#ebebeb"></div>
<div class="b" style="left:169px;top:294px;width:1px;height:17px;background:#ebebeb"></div>
<div class="b" style="left:187px;top:294px;width:1px;height:17px;background:#ebebeb"></div>
<div class="b" style="left:248px;top:294px;width:1px;height:17px;background:#ebebeb"></div>
<div class="b" style="left:327px;top:294px;width:1px;height:17px;background:#ebebeb"></div>
<div class="b" style="left:373px;top:294px;width:1px;height:17px;background:#ebebeb"></div>
<div class="b" style="left:425px;top:294px;width:1px;height:17px;background:#ebebeb"></div>
<div class="b" style="left:511px;top:294px;width:1px;height:17px;background:#ebebeb"></div>
<div class="b" style="left:645px;top:294px;width:1px;height:17px;background:#ebebeb"></div>
<div class="b" style="left:699px;top:294px;width:1px;height:17px;background:#ebebeb"></div>
<div class="b" style="left:745px;top:294px;width:1px;height:17px;background:#ebebeb"></div>
<div class="b" style="left:788px;top:294px;width:1px;height:17px;background:#ebebeb"></div>
<div class="b" style="left:879px;top:294px;width:1px;height:17px;background:#ebebeb"></div>
<div class="b" style="left:912px;top:294px;width:1px;height:17px;background:#ebebeb"></div>
<div class="t n" style="left:13px;top:297px;">15</div>
<svg class="ar" style="left:35px;top:296px" width="14" height="10" viewBox="0 0 14 10"><path d="M0.7 2.75H6.6V1.15L11.6 5L6.6 8.85V7.25H0.7Z" fill="#f2aa00" stroke="#3e3214" stroke-width="0.9" stroke-linejoin="miter"/></svg>
<div class="t n" style="left:52px;top:296px;">40167</div>
<svg class="ar" style="left:119px;top:296px" width="14" height="10" viewBox="0 0 14 10"><path d="M0.7 2.75H6.6V1.15L11.6 5L6.6 8.85V7.25H0.7Z" fill="#f2aa00" stroke="#3e3214" stroke-width="0.9" stroke-linejoin="miter"/></svg>
<div class="t r n" style="right:861px;top:296px;">130</div>
<svg class="ar" style="left:190px;top:296px" width="14" height="10" viewBox="0 0 14 10"><path d="M0.7 2.75H6.6V1.15L11.6 5L6.6 8.85V7.25H0.7Z" fill="#f2aa00" stroke="#3e3214" stroke-width="0.9" stroke-linejoin="miter"/></svg>
<div class="t n" style="left:207px;top:296px;">20</div>
<div class="cb" style="left:282px;top:295px"></div>
<div class="t n" style="left:375px;top:296px;">037954</div>
<svg class="ar" style="left:428px;top:296px" width="14" height="10" viewBox="0 0 14 10"><path d="M0.7 2.75H6.6V1.15L11.6 5L6.6 8.85V7.25H0.7Z" fill="#f2aa00" stroke="#3e3214" stroke-width="0.9" stroke-linejoin="miter"/></svg>
<div class="t n" style="left:446px;top:296px;">TFS-72997</div>
<div class="t " style="left:513px;top:296px;">Finished Product / Normal</div>
<div class="t r n" style="right:319px;top:296px;">1.000000</div>
<div class="t " style="left:701px;top:296px;">Pcs</div>
<div class="t r n" style="right:139px;top:296px;">0.000000</div>
<div class="t " style="left:881px;top:296px;">Pcs</div>
<div class="t n" style="left:977px;top:296px;color:#b3b3b3">0.0</div>
<div class="b" style="left:11px;top:311px;width:20px;height:16px;background:linear-gradient(#dce1e6,#d6dce2)"></div>
<div class="b" style="left:11px;top:326px;width:20px;height:1px;background:#bcd3ea"></div>
<div class="b" style="left:33px;top:311px;width:958px;height:16px;background:#fff"></div>
<div class="b" style="left:33px;top:327px;width:958px;height:1px;background:#ebebeb"></div>
<div class="b" style="left:94px;top:311px;width:1px;height:17px;background:#ebebeb"></div>
<div class="b" style="left:169px;top:311px;width:1px;height:17px;background:#ebebeb"></div>
<div class="b" style="left:187px;top:311px;width:1px;height:17px;background:#ebebeb"></div>
<div class="b" style="left:248px;top:311px;width:1px;height:17px;background:#ebebeb"></div>
<div class="b" style="left:327px;top:311px;width:1px;height:17px;background:#ebebeb"></div>
<div class="b" style="left:373px;top:311px;width:1px;height:17px;background:#ebebeb"></div>
<div class="b" style="left:425px;top:311px;width:1px;height:17px;background:#ebebeb"></div>
<div class="b" style="left:511px;top:311px;width:1px;height:17px;background:#ebebeb"></div>
<div class="b" style="left:645px;top:311px;width:1px;height:17px;background:#ebebeb"></div>
<div class="b" style="left:699px;top:311px;width:1px;height:17px;background:#ebebeb"></div>
<div class="b" style="left:745px;top:311px;width:1px;height:17px;background:#ebebeb"></div>
<div class="b" style="left:788px;top:311px;width:1px;height:17px;background:#ebebeb"></div>
<div class="b" style="left:879px;top:311px;width:1px;height:17px;background:#ebebeb"></div>
<div class="b" style="left:912px;top:311px;width:1px;height:17px;background:#ebebeb"></div>
<div class="t n" style="left:13px;top:314px;">16</div>
<svg class="ar" style="left:35px;top:313px" width="14" height="10" viewBox="0 0 14 10"><path d="M0.7 2.75H6.6V1.15L11.6 5L6.6 8.85V7.25H0.7Z" fill="#f2aa00" stroke="#3e3214" stroke-width="0.9" stroke-linejoin="miter"/></svg>
<div class="t n" style="left:52px;top:313px;">40167</div>
<svg class="ar" style="left:119px;top:313px" width="14" height="10" viewBox="0 0 14 10"><path d="M0.7 2.75H6.6V1.15L11.6 5L6.6 8.85V7.25H0.7Z" fill="#f2aa00" stroke="#3e3214" stroke-width="0.9" stroke-linejoin="miter"/></svg>
<div class="t r n" style="right:861px;top:313px;">140</div>
<svg class="ar" style="left:190px;top:313px" width="14" height="10" viewBox="0 0 14 10"><path d="M0.7 2.75H6.6V1.15L11.6 5L6.6 8.85V7.25H0.7Z" fill="#f2aa00" stroke="#3e3214" stroke-width="0.9" stroke-linejoin="miter"/></svg>
<div class="t n" style="left:207px;top:313px;">20</div>
<div class="cb" style="left:282px;top:312px"></div>
<div class="t n" style="left:375px;top:313px;">037954</div>
<svg class="ar" style="left:428px;top:313px" width="14" height="10" viewBox="0 0 14 10"><path d="M0.7 2.75H6.6V1.15L11.6 5L6.6 8.85V7.25H0.7Z" fill="#f2aa00" stroke="#3e3214" stroke-width="0.9" stroke-linejoin="miter"/></svg>
<div class="t n" style="left:446px;top:313px;">TFS-72997</div>
<div class="t " style="left:513px;top:313px;">Finished Product / Normal</div>
<div class="t r n" style="right:319px;top:313px;">1.000000</div>
<div class="t " style="left:701px;top:313px;">Pcs</div>
<div class="t r n" style="right:139px;top:313px;">0.000000</div>
<div class="t " style="left:881px;top:313px;">Pcs</div>
<div class="t n" style="left:977px;top:313px;color:#b3b3b3">0.0</div>
<div class="b" style="left:990px;top:35px;width:1px;height:292px;background:#ebebeb"></div>
<div class="b" style="left:992px;top:35px;width:16px;height:309px;background:#f0f0f0"></div>
<svg class="ar" style="left:994px;top:39px" width="11" height="8" viewBox="0 0 11 8"><path d="M1.9 6.5L5.5 2.9L9.1 6.5" fill="none" stroke="#4d4d4d" stroke-width="2.1"/></svg>
<div class="b" style="left:992px;top:52px;width:15px;height:90px;background:#c8c8c8"></div>
<svg class="ar" style="left:994px;top:332px" width="11" height="8" viewBox="0 0 11 8"><path d="M1.9 1.5L5.5 5.1L9.1 1.5" fill="none" stroke="#4d4d4d" stroke-width="2.1"/></svg>
<div class="b" style="left:11px;top:345px;width:980px;height:16px;background:#efefef"></div>
<div class="b" style="left:11px;top:344px;width:10px;height:17px;background:#6b6b6b"></div>
<svg class="ar" style="left:25px;top:347px" width="9" height="11" viewBox="0 0 9 11"><path d="M6.5 1.9L2.9 5.5L6.5 9.1" fill="none" stroke="#4d4d4d" stroke-width="2.1"/></svg>
<div class="b" style="left:38px;top:345px;width:335px;height:15px;background:#c8c8c8"></div>
<svg class="ar" style="left:978px;top:347px" width="9" height="11" viewBox="0 0 9 11"><path d="M2.5 1.9L6.1 5.5L2.5 9.1" fill="none" stroke="#4d4d4d" stroke-width="2.1"/></svg>
<div class="b" style="left:991px;top:344px;width:17px;height:17px;background:#c8c8c8"></div>
<div class="lbl" style="left:20px;top:365px;width:78px"></div>
<div class="t " style="left:19px;top:368px;">Supplier</div>
<div class="lbl" style="left:20px;top:381px;width:78px"></div>
<div class="t " style="left:19px;top:384px;">Quantity</div>
<div class="lbl" style="left:20px;top:397px;width:78px"></div>
<div class="t " style="left:19px;top:400px;">Price per unit</div>
<div class="lbl" style="left:20px;top:413px;width:78px"></div>
<div class="t " style="left:19px;top:416px;">Price List</div>
<div class="lbl" style="left:28px;top:429px;width:70px"></div>
<div class="t " style="left:27px;top:432px;">Price factor</div>
<div class="lbl" style="left:20px;top:445px;width:78px"></div>
<div class="t " style="left:19px;top:448px;">Minimum price</div>
<div class="lbl" style="left:20px;top:461px;width:78px"></div>
<div class="t " style="left:19px;top:464px;">Shipping price</div>
<div class="lbl" style="left:20px;top:477px;width:78px"></div>
<div class="t " style="left:19px;top:480px;">Total Price</div>
<div class="lbl" style="left:20px;top:493px;width:78px"></div>
<div class="t " style="left:19px;top:496px;">Delivery Date</div>
<svg class="ar" style="left:84px;top:368px" width="15" height="10" viewBox="0 0 15 10"><path d="M0.8 2.8H7.3V1.1L13.3 4.9L7.3 8.7V7H0.8Z" fill="#f2aa00" stroke="#3e3214" stroke-width="0.9" stroke-linejoin="miter"/></svg>
<svg class="ar" style="left:84px;top:384px" width="15" height="10" viewBox="0 0 15 10"><path d="M0.8 2.8H7.3V1.1L13.3 4.9L7.3 8.7V7H0.8Z" fill="#f2aa00" stroke="#3e3214" stroke-width="0.9" stroke-linejoin="miter"/></svg>
<div class="fld" style="left:98px;top:365px;width:114px;background:#fff"></div>
<div class="t " style="left:99px;top:368px;">S001</div>
<div class="dd" style="left:198px;top:370px"></div>
<div class="fld" style="left:98px;top:381px;width:114px;background:#ff8080"></div>
<div class="t r n" style="right:807px;top:384px;">0.0</div>
<div class="fld" style="left:98px;top:397px;width:114px;background:#fff"></div>
<div class="t r n" style="right:807px;top:400px;">15.000</div>
<div class="cb" style="left:99px;top:414px;border-color:#333"></div>
<div class="fld" style="left:98px;top:429px;width:114px;background:#fff"></div>
<div class="t r n" style="right:807px;top:432px;">1.000000</div>
<div class="fld" style="left:98px;top:445px;width:114px;background:#fff"></div>
<div class="t r n" style="right:807px;top:448px;">0.000</div>
<div class="fld" style="left:98px;top:461px;width:98px;background:#fff"></div>
<div class="t r n" style="right:823px;top:464px;">0.000</div>
<div class="fld" style="left:98px;top:477px;width:114px;background:#fff"></div>
<div class="t r n" style="right:807px;top:480px;">0.000</div>
<div class="fld" style="left:98px;top:493px;width:114px;background:#fff"></div>
<div class="dd" style="left:198px;top:498px"></div>
<div class="b" style="left:99px;top:494px;width:96px;height:12px;background:#ff8080"></div>
<div class="t r n" style="right:823px;top:496px;">25/03/2022</div>
<div class="fld" style="left:218px;top:365px;width:474px;background:#fff"></div>
<div class="t " style="left:219px;top:368px;">Supplier 001</div>
<div class="fld" style="left:218px;top:381px;width:70px;background:#fff"></div>
<div class="t " style="left:219px;top:384px;">Pcs</div>
<div class="dd" style="left:274px;top:386px"></div>
<div class="fld" style="left:218px;top:397px;width:70px;background:#fff"></div>
<div class="t " style="left:219px;top:400px;">$</div>
<div class="dd" style="left:274px;top:402px"></div>
<div class="t " style="left:219px;top:416px;">Pcs</div>
<div class="lbl" style="left:200px;top:461px;width:38px"></div>
<div class="t " style="left:199px;top:464px;">Per</div>
<div class="fld" style="left:238px;top:461px;width:50px;background:#fff"></div>
<div class="t r n" style="right:731px;top:464px;">0</div>
<div class="t " style="left:219px;top:480px;">$</div>
<div class="lbl" style="left:314px;top:381px;width:80px"></div>
<div class="t " style="left:314px;top:384px;">Description</div>
<div class="fld" style="left:394px;top:381px;width:298px;background:#fff"></div>
<div class="t " style="left:395px;top:384px;">External Operation</div>
<div class="b" style="left:314px;top:397px;width:378px;height:66px;border:1px solid #b9b9b9;background:#fff"></div>
<div class="t " style="left:315px;top:400px;">External Operation</div>
<div class="lbl" style="left:704px;top:365px;width:166px"></div>
<div class="t " style="left:704px;top:368px;">Item</div>
<div class="lbl" style="left:704px;top:381px;width:166px"></div>
<div class="t " style="left:704px;top:384px;">Project</div>
<div class="lbl" style="left:704px;top:397px;width:166px"></div>
<div class="t " style="left:704px;top:400px;">Factor</div>
<div class="lbl" style="left:704px;top:413px;width:166px"></div>
<div class="t " style="left:704px;top:416px;">Purchase order on Warehouse</div>
<div class="lbl" style="left:704px;top:429px;width:166px"></div>
<div class="t " style="left:704px;top:432px;">Test UDF1</div>
<div class="lbl" style="left:704px;top:445px;width:166px"></div>
<div class="t " style="left:704px;top:448px;">UDF2</div>
<div class="fld" style="left:870px;top:365px;width:114px;background:#fff"></div>
<div class="t " style="left:871px;top:368px;">Ext_Service</div>
<div class="dd" style="left:970px;top:370px"></div>
<div class="fld" style="left:870px;top:381px;width:114px;background:#fff"></div>
<div class="dd" style="left:970px;top:386px"></div>
<div class="fld" style="left:870px;top:397px;width:114px;background:#fff"></div>
<div class="t r n" style="right:35px;top:400px;">1.000000</div>
<svg class="ar" style="left:856px;top:416px" width="15" height="10" viewBox="0 0 15 10"><path d="M0.8 2.8H7.3V1.1L13.3 4.9L7.3 8.7V7H0.8Z" fill="#f2aa00" stroke="#3e3214" stroke-width="0.9" stroke-linejoin="miter"/></svg>
<div class="fld" style="left:870px;top:413px;width:114px;background:#fff"></div>
<div class="dd" style="left:970px;top:418px"></div>
<div class="fld" style="left:870px;top:429px;width:114px;background:#fff"></div>
<div class="fld" style="left:870px;top:445px;width:114px;background:#fff"></div>
<div class="lbl" style="left:704px;top:461px;width:71px;height:63px"></div>
<div class="t " style="left:704px;top:464px;">Address</div>
<div class="b" style="left:775px;top:461px;width:210px;height:62px;border:1px solid #b9b9b9;background:#fff"></div>
<div class="t " style="left:776px;top:512px;">USA</div>
<div class="btn" style="left:14px;width:82px">Order</div>
<div class="btn" style="left:101px;width:77px">C<u>a</u>ncel</div>
<div class="btn" style="left:195px;width:114px">Draft Pur.Order</div>
<div class="btn" style="left:314px;width:99px">Only Shortage</div>
<div class="btn" style="left:418px;width:55px">All</div>
<div class="btn" style="left:477px;width:76px">Pre-assign</div>
<div class="b" style="left:14px;top:541px;width:6px;height:20px;background:#eea400"></div>
<svg class="ar" style="left:990px;top:552px" width="17" height="17" viewBox="0 0 17 17"><path d="M1.25 7V1.25H7.5" fill="none" stroke="#444" stroke-width="2.5"/><path d="M9 0H13A3 3 0 0 1 16 3V6.5H9Z" fill="#f47b20"/><rect x="0" y="9" width="6" height="6.7" fill="#444"/><path d="M14.9 8V14.6H8" fill="none" stroke="#444" stroke-width="2.2"/></svg></body></html>
